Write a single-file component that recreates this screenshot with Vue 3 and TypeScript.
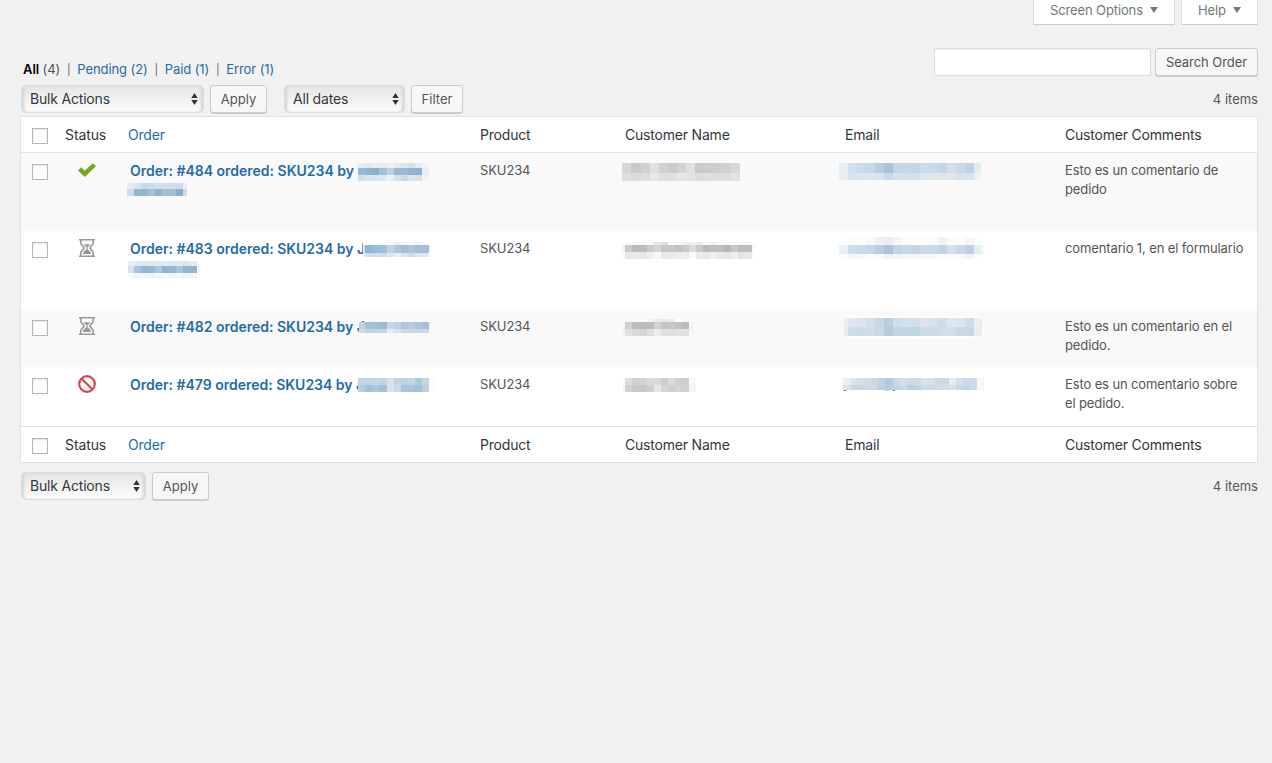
<script setup lang="ts">
type Band = [y: number, height: number, colors: string]

interface Mosaic {
  left: number
  top: number
  widths: number[]
  bands: Band[]
}

interface OrderRow {
  id: number
  status: 'paid' | 'pending' | 'error'
  title: string
  sku: string
  comment: string
  tall: boolean
  orderMasks: Mosaic[]
  nameMask: Mosaic
  emailMask: Mosaic
}

const filters = [
  { label: 'Pending (2)', cls: 'pending' },
  { label: 'Paid (1)', cls: 'paid' },
  { label: 'Error (1)', cls: 'error' },
]

const columns = ['Product', 'Customer Name', 'Email', 'Customer Comments']

const rows: OrderRow[] = [
  {
    id: 484,
    status: 'paid',
    title: 'Order: #484 ordered: SKU234 by J',
    sku: 'SKU234',
    comment: 'Esto es un comentario de pedido',
    tall: true,
    orderMasks: [
      {
        left: 230,
        top: 10,
        widths: [7, 7, 7, 8, 7, 7, 7, 7, 7, 7],
        bands: [
          [0, 5, 'e6ebef e1e8ed e9edf0 e6ebef eff2f4 e4eaee dfe7ed d5e1ea e3eaf0 f2f4f6'],
          [5, 7, '98b9d3 8fb3d0 8bb0ce a4c1d7 c1d0df 98b9d3 9bbbd5 91b5d1 8db2cf e6edf3'],
          [12, 6, 'd0dfe9 d8e3ec dae5ed e0e8ed ebf0f3 d7e2eb cadae7 dbe5ed d7e2ed f1f5f8'],
        ],
      },
      {
        left: -1,
        top: 30,
        widths: [7, 7, 7, 7, 7, 7, 7, 7, 4],
        bands: [
          [0, 6, 'e7ecf1 d9e4ec c9d9e6 cddbe6 d4e0e9 d3e0e9 cfdde7 cfdde8 e8edf1'],
          [6, 7, 'cddce8 92b5d0 94b6d0 a5c1d7 91b3cf a3bfd6 a4bbd4 8baecd ccdce8'],
        ],
      },
    ],
    nameMask: {
      left: -3,
      top: 8,
      widths: [9, 10, 9, 9, 9, 9, 9, 9, 9, 9, 9, 9, 9],
      bands: [
        [0, 2, 'fbfbfb fafafa fafafa fafafa fafafa fdfdfd fcfcfc fbfbfb fdfdfd fefefe fcfcfc fcfcfc fafafa'],
        [2, 10, 'd8d7d8 c9c9c9 cfd1d1 e0e0e1 d0d2d1 cacbc8 d1d2d2 dfdfe0 c7c8c8 cccdcc cdcecd cfd0cf d7d9dc'],
        [12, 8, 'dfdfe0 dadbda dddddd e8e8e8 dedfdf e0e0df e6e8e7 e3e3e3 dcdddb dfe1e1 dddddb dddddb e2e3e6'],
      ],
    },
    emailMask: {
      left: -6,
      top: 8,
      widths: [9, 9, 9, 9, 9, 9, 9, 9, 9, 9, 9, 9, 9, 9, 9, 7],
      bands: [
        [0, 2, 'f8f8f8 fdfcfb fcfbfa fbfafa fafafa fafafa fdfcfb fdfcfb fdfcfb fdfcfb fdfcfb fdfcfb fafafa fdfcfb fafafa f9f9f9'],
        [2, 10, 'e8edf2 d1e0ea c9dbe7 c6d8e5 bacde0 aac3da c3d6e4 c6d7e4 c2d5e3 cddde8 c8dae6 c2d5e3 d5e0eb c8dae6 bfd2e3 e3ebf2'],
        [12, 7, 'e8edf2 dae5ed dae5ed dee6ed dae3ec cad8e5 d4e1e9 d4e0e8 d4e1ea dce6ec dee6eb dfe6eb dfe6ec dae3eb d9e3ec eef1f4'],
      ],
    },
  },
  {
    id: 483,
    status: 'pending',
    title: 'Order: #483 ordered: SKU234 by J',
    sku: 'SKU234',
    comment: 'comentario 1, en el formulario',
    tall: true,
    orderMasks: [
      {
        left: 235,
        top: 11,
        widths: [2, 7, 8, 7, 7, 7, 7, 7, 7, 7, 2],
        bands: [
          [0, 3, 'ffffff fafbfc fbfcfd f8fafc f9fbfc eaf0f4 f3f7f9 fbfcfd f1f5f9 f8fafc ffffff'],
          [3, 8, 'd5e3ed 90b5d2 9abcd6 9fc0d8 bfd3e1 adc8dc 9fbfd6 a8c5da a0bfd6 a2bed9 f4f7fa'],
          [11, 4, 'f6f9fb d0dfea d0dfeb cedee9 d9e5ed e9eff4 d8e4ed cedee8 dae5ee dce7f1 f7f9fb'],
        ],
      },
      {
        left: 0,
        top: 30,
        widths: [6, 7, 7, 7, 7, 7, 7, 7, 7, 7, 3],
        bands: [
          [0, 5, 'e8f0f5 e0eaf1 dce8f0 e1ebf2 ddeaf1 e5edf3 dbe8f0 dfeaf1 dae7f0 e4edf3 fafcfd'],
          [5, 7, 'd5e2ec a9c5da 92b5d1 9abad4 b0c9de 8fb3d0 98b9d3 abc5db 92b5d1 91b5d0 f3f7fa'],
          [12, 5, 'fafcfd eef4f8 f2f6f9 edf3f7 f4f7fa f5f8fb edf3f7 f4f7fa edf3f7 f2f6f9 ffffff'],
        ],
      },
    ],
    nameMask: {
      left: -3,
      top: 11,
      widths: [3, 7, 8, 7, 7, 7, 7, 7, 7, 7, 7, 7, 7, 7, 7, 7, 7, 7, 7, 3],
      bands: [
        [0, 3, 'ffffff f9f9f9 f7f7f7 fafafa fbfbfb e8e8e8 dfe0e0 ffffff f7f7f7 f0f0f0 f1f1f1 ececec f9f9f9 f1f1f1 fafafa fbfbfb f9f9f9 fbfbfb f8f8f8 ffffff'],
        [3, 7, 'f4f4f4 c9caca bababa bdbdbb c9cbcc d8d5d7 c6c8c7 c8caca c2c3c0 c8cacc dddbdf caccca b9bab9 bfc0c0 bdbfbd b5b7b5 c5c7c7 bbbcbc bebfc0 f9f9fa'],
        [10, 7, 'fafafa e9e9e9 eaeaea e7e8e6 efefef f7f7f7 e9e9e9 eaeaea eeeeed ededed fafafa ebebeb e5e6e8 efefef e8e8e9 e4e5e4 efefef e3e4e6 e6e8ea fafbfb'],
      ],
    },
    emailMask: {
      left: -6,
      top: 6,
      widths: [9, 9, 9, 9, 9, 9, 9, 9, 9, 9, 9, 9, 9, 9, 9, 7, 3],
      bands: [
        [0, 8, 'fcfdfe f8fcfd fafdfe f5f9fc ebf1f7 e7eef4 f3f7fa fcfdfd fcfcfc fbfcfc fbfdfd edf3f7 fafdfe fafdfe f4f8fb fcfefe ffffff'],
        [8, 9, 'eaf1f5 cfdfea c9dce8 c6d8e5 b8cde1 abc1dc c2d5e5 c8d8e5 c3d5e4 cbdce8 c8dae7 c1d4e3 d7e1ec c8d9e8 c0d1e5 e5edf4 f3f8fb'],
        [17, 5, 'fafcfe f1f6fa f4f8fb fbfdfe f9fafc edf3f8 f0f5f9 f2f7fa f2f6f9 f4f8fb f3f7fa fafcfe f7fafc fafafb f1f6fa fafcfe ffffff'],
      ],
    },
  },
  {
    id: 482,
    status: 'pending',
    title: 'Order: #482 ordered: SKU234 by J',
    sku: 'SKU234',
    comment: 'Esto es un comentario en el pedido.',
    tall: false,
    orderMasks: [
      {
        left: 231,
        top: 13,
        widths: [6, 7, 7, 8, 7, 7, 7, 7, 7, 7, 2],
        bands: [
          [0, 7, 'bfd1e0 a4c1d7 a3c0d6 9abbd3 c4d7e3 bdd1df aac6d9 b7cddd aac6d9 a5c0d9 f3f6f9'],
          [7, 4, 'cbdce7 c1d4e2 c2d5e3 c4d7e5 e4edf2 d8e4eb c8dae6 c8dae6 c7d8e4 c9d9e7 f5f7f9'],
        ],
      },
    ],
    nameMask: {
      left: -2,
      top: 10,
      widths: [2, 7, 8, 7, 7, 7, 7, 7, 7, 7, 5],
      bands: [
        [0, 3, 'f9f9f9 f5f5f5 f8f8f8 fefefe f5f5f5 e9e9e9 e8e8e8 ededed ffffff f6f6f6 f9f9f9'],
        [3, 7, 'f5f5f5 cecdd1 bdbebe bdbebb bcbdbf d3d2d4 c5c6c3 c5c9c6 c2c4c2 bcbdc0 f3f5f6'],
        [10, 7, 'f2f2f2 e0dfe2 d9dad9 d5d6d3 dedfe0 ececed e0e0df dddfdc e1e1e1 e2e2e3 f6f8f8'],
      ],
    },
    emailMask: {
      left: -1,
      top: 6,
      widths: [4, 9, 9, 9, 9, 9, 9, 9, 9, 9, 9, 9, 9, 9, 9, 8],
      bands: [
        [0, 3, 'fcfbf9 fefdfb fefdfb fefdfb fefdfb fefdfb fefdfb fefdfb fefdfb fefdfb fefdfb fefdfb fefdfb fefdfb fefdfb fcfbf9'],
        [3, 9, 'e9eef1 dee7ed d9e4eb d4e0e9 c8d7e4 bbcfdf cfdde8 d2e0e9 cfdfe8 dae4ec d6e1ea cedde8 dfe7ed dce5ec ceddea eaeff2'],
        [12, 9, 'e4ebf0 d0dee8 cbdce7 cfdde8 c9d8e4 b6cadd c3d5e3 c2d5e3 c0d5e2 cbdce7 cddde7 d2dfe8 d1dee8 cad7e4 c9d8e6 e8edf1'],
        [21, 2, 'fafafa fefefe fefefe fefefe fefefe fefefe fefefe fefefe fefefe fefefe fefefe fefefe fefefe fefefe fefefe fafafa'],
      ],
    },
  },
  {
    id: 479,
    status: 'error',
    title: 'Order: #479 ordered: SKU234 by J',
    sku: 'SKU234',
    comment: 'Esto es un comentario sobre el pedido.',
    tall: false,
    orderMasks: [
      {
        left: 230,
        top: 11,
        widths: [7, 7, 7, 8, 7, 7, 7, 7, 7, 7, 6],
        bands: [
          [0, 7, 'c5d7e4 c3d5e3 c4d6e4 bfd2e1 d7e3ec c3d5e2 bfd3e2 c4d6e4 afc9db c1d5e3 fbfcfd'],
          [7, 7, 'b7cee0 a5c1da adc8dd a3bfda d8e3ec ced9e5 a8c4dc a8c5da a5c1da b9d0e3 fdfdfe'],
        ],
      },
    ],
    nameMask: {
      left: -2,
      top: 10,
      widths: [2, 7, 8, 7, 7, 7, 7, 7, 7, 7, 7],
      bands: [
        [1, 7, 'fbfbfb dddddd d0d0d0 d3d3d2 d9dbd9 dcd9d8 cdcece d9dad9 cfd0cf cdcfd1 f8f8fa'],
        [8, 7, 'f5f5f5 d1d1d2 c8c8c8 c6c7c2 cecfcd e6e5e4 d5d5d5 cecfcf d3d3d2 d1d1d2 f3f4f8'],
      ],
    },
    emailMask: {
      left: -5,
      top: 11,
      widths: [3, 1, 2, 4, 7, 7, 7, 7, 7, 4, 4, 2, 5, 7, 7, 7, 7, 7, 7, 7, 7, 7, 7, 7, 7],
      bands: [
        [0, 7, 'fafcfd eaf0f4 eaf0f4 eaf0f4 dae6ed d2e0ea cfdee9 c7d8e6 bed0e2 afc9df afc9df c8dae9 c8dae9 d4e0e9 c9dce7 ccdde7 d8e4ec d1e0e9 c8dae5 c7d9e6 e4ebf2 d4e1ea c9dae9 cbdcea f5f9fd'],
        [7, 5, 'fafcfd dae5ee dae5ee dae5ee c9dae7 c4d7e4 cadae7 ccdaea bdcee1 b4cade b4cade c0d3e4 c0d3e4 c8dae6 b9d0de bfd4e0 c9dce9 c4d8e6 cfdeea d0deea d6e1ed c6d9e6 c1d5e4 cbdcea f5f9fd'],
        [12, 1, 'ffffff d6e1e8 3f83b4 ffffff ffffff ffffff ffffff ffffff ffffff bfd1e1 ffffff 3f83b4 ffffff ffffff ffffff ffffff ffffff ffffff ffffff ffffff ffffff ffffff ffffff ffffff ffffff'],
      ],
    },
  },
]

function cells(mosaic: Mosaic) {
  return mosaic.bands.flatMap(([y, height, colors]) => {
    const fills = colors.split(' ')
    let x = 0
    return mosaic.widths.map((width, i) => {
      const cell = { x, y, width, height, fill: '#' + fills[i] }
      x += width
      return cell
    })
  })
}

const maskWidth = (m: Mosaic) => m.widths.reduce((sum, w) => sum + w, 0)
const maskHeight = (m: Mosaic) => Math.max(...m.bands.map(([y, h]) => y + h))
const maskPlace = (m: Mosaic) => ({ left: m.left + 'px', top: m.top + 'px' })
</script>

<template>
  <div class="page">
    <div class="screen-meta">
      <button class="meta-tab options"><span>Screen Options</span><i class="caret"></i></button>
      <button class="meta-tab help"><span>Help</span><i class="caret"></i></button>
    </div>

    <div class="top-line">
      <ul class="filters">
        <li><b>All</b> <span class="count">(4)</span></li>
        <li v-for="f in filters" :key="f.label" :class="f.cls"><span class="bar">|</span><a>{{ f.label }}</a></li>
      </ul>
      <div class="search">
        <input type="text" aria-label="Search Order" />
        <button class="button search-button">Search Order</button>
      </div>
    </div>

    <div class="tablenav top">
      <div class="select wide">
        <span>Bulk Actions</span>
        <svg width="7" height="12" viewBox="0 0 7 12"><path d="M3.5 0 6.7 5H.3zM3.5 12 .3 7h6.4z" /></svg>
      </div>
      <button class="button apply">Apply</button>
      <div class="select dates">
        <span>All dates</span>
        <svg width="7" height="12" viewBox="0 0 7 12"><path d="M3.5 0 6.7 5H.3zM3.5 12 .3 7h6.4z" /></svg>
      </div>
      <button class="button filter">Filter</button>
      <span class="items">4 items</span>
    </div>

    <div class="table">
      <div class="row head">
        <div><i class="checkbox"></i></div>
        <div><span class="status-label">Status</span></div>
        <div><a>Order</a></div>
        <div v-for="c in columns" :key="c">{{ c }}</div>
      </div>
      <div v-for="row in rows" :key="row.id" class="row body" :class="{ tall: row.tall }">
        <div><i class="checkbox"></i></div>
        <div class="status">
          <svg v-if="row.status === 'paid'" width="18" height="18" viewBox="0 0 18 18">
            <path d="M0 9.4 3.1 6.2 6.7 9.7 14.9 2.2 18 5.3 6.7 16z" fill="#74a824" />
          </svg>
          <svg v-else-if="row.status === 'pending'" width="18" height="18" viewBox="0 0 18 18">
            <path
              d="M1 .8h16M1 17.2h16M2.8 1.5v2.7C2.8 6 6.1 7.6 6.1 9s-3.3 3-3.3 4.8v2.7M15.2 1.5v2.7c0 1.8-3.3 3.4-3.3 4.8s3.3 3 3.3 4.8v2.7"
              fill="none"
              stroke="#999"
              stroke-width="1.6"
            />
            <path d="M5.8 5.2h6.4Q11.5 6.8 9.6 8v2.2q2.8 1.5 3.8 4.9H4.6q1-3.4 3.8-4.9V8Q6.5 6.8 5.8 5.2z" fill="#999" />
          </svg>
          <svg v-else width="18" height="18" viewBox="0 0 18 18">
            <circle cx="9" cy="9" r="7.8" fill="none" stroke="#d94848" stroke-width="2.2" />
            <path d="m3.7 3.7 10.6 10.6" stroke="#d94848" stroke-width="2.2" />
          </svg>
        </div>
        <div class="order">
          <a>{{ row.title }}</a>
          <svg
            v-for="(m, i) in row.orderMasks"
            :key="i"
            class="mask"
            :style="maskPlace(m)"
            :width="maskWidth(m)"
            :height="maskHeight(m)"
            shape-rendering="crispEdges"
          >
            <rect v-for="(c, k) in cells(m)" :key="k" v-bind="c" />
          </svg>
        </div>
        <div class="sku">{{ row.sku }}</div>
        <div v-for="(m, i) in [row.nameMask, row.emailMask]" :key="i">
          <svg
            class="mask"
            :style="maskPlace(m)"
            :width="maskWidth(m)"
            :height="maskHeight(m)"
            shape-rendering="crispEdges"
          >
            <rect v-for="(c, k) in cells(m)" :key="k" v-bind="c" />
          </svg>
        </div>
        <div class="comment">{{ row.comment }}</div>
      </div>
      <div class="row foot">
        <div><i class="checkbox"></i></div>
        <div><span class="status-label">Status</span></div>
        <div><a>Order</a></div>
        <div v-for="c in columns" :key="c">{{ c }}</div>
      </div>
    </div>

    <div class="tablenav bottom">
      <div class="select narrow">
        <span>Bulk Actions</span>
        <svg width="7" height="12" viewBox="0 0 7 12"><path d="M3.5 0 6.7 5H.3zM3.5 12 .3 7h6.4z" /></svg>
      </div>
      <button class="button apply">Apply</button>
      <span class="items">4 items</span>
    </div>
  </div>
</template>

<style>
html,
body {
  margin: 0;
  background: #f1f1f1;
}
</style>

<style scoped>
.page {
  box-sizing: border-box;
  width: 1272px;
  height: 763px;
  padding: 0 14px 0 20px;
  overflow: hidden;
  background: #f1f1f1;
  color: #555;
  font-family: Inter, "Liberation Sans", sans-serif;
  font-size: 13px;
  line-height: 19px;
}

a {
  color: #1f6ca8;
}

button {
  font: inherit;
}

.screen-meta {
  display: flex;
  justify-content: flex-end;
  gap: 6px;
  height: 25px;
}

.meta-tab {
  box-sizing: border-box;
  display: flex;
  align-items: center;
  gap: 7px;
  height: 25px;
  padding: 0 0 3px 16px;
  border: 1px solid #ddd;
  border-top: 0;
  border-bottom-color: #ccc;
  background: #fff;
  color: #72777c;
  letter-spacing: -0.12px;
  white-space: nowrap;
}

.options {
  width: 142px;
}

.help {
  width: 77px;
}

.caret {
  margin-bottom: 2px;
  border: 4px solid transparent;
  border-top: 6px solid #72777c;
  border-bottom: 0;
}

.top-line {
  display: flex;
  justify-content: space-between;
  height: 60px;
}

.filters {
  display: flex;
  margin: 35px 0 0 3px;
  padding: 0;
  list-style: none;
  letter-spacing: -0.08px;
  white-space: nowrap;
}

.filters b {
  color: #000;
  font-weight: 600;
}

.bar {
  display: inline-block;
  width: 17px;
  color: #666;
  font-size: 11px;
  text-align: center;
}

.search {
  display: flex;
  gap: 4px;
  margin-top: 23px;
}

.search input {
  box-sizing: border-box;
  width: 217px;
  height: 28px;
  border: 1px solid #ddd;
  background: #fff;
  box-shadow: inset 0 1px 2px rgba(0, 0, 0, 0.07);
}

.button {
  box-sizing: border-box;
  height: 28px;
  padding: 0;
  border: 1px solid #ccc;
  border-radius: 3px;
  background: #f7f7f7;
  box-shadow: 0 1px 0 #ccc;
  color: #555;
  text-align: center;
  white-space: nowrap;
}

.search-button {
  width: 103px;
  letter-spacing: -0.05px;
}

.apply {
  width: 57px;
}

.filter {
  width: 52px;
}

.tablenav {
  display: flex;
  align-items: flex-start;
  padding-left: 1px;
}

.top {
  height: 31px;
}

.bottom {
  margin-top: 9px;
}

.select {
  box-sizing: border-box;
  display: flex;
  align-items: center;
  justify-content: space-between;
  height: 28px;
  padding: 0 5px 0 8px;
  border: 1px solid #ddd;
  border-radius: 5px;
  background: linear-gradient(#e5e5e5, #fdfdfd);
  box-shadow: inset 3px 0 3px -1px #d4d4d4, inset -3px 0 3px -1px #d4d4d4;
  color: #32373c;
  font-size: 14px;
  letter-spacing: -0.19px;
  white-space: nowrap;
}

.select span {
  padding-bottom: 1px;
}

.select svg {
  fill: #333;
}

.wide {
  width: 183px;
  margin-right: 6px;
}

.dates {
  width: 121px;
  margin: 0 6px 0 17px;
}

.narrow {
  width: 125px;
  margin-right: 6px;
}

.items {
  margin: 5px 0 0 auto;
}

.table {
  border: 1px solid #e1e1e1;
  background: #fff;
}

.row {
  display: grid;
  grid-template-columns: 44px 63px 352px 145px 220px 220px 1fr;
}

.row > div {
  position: relative;
}

.head,
.foot {
  height: 35px;
  color: #32373c;
  font-size: 14px;
  letter-spacing: -0.2px;
  line-height: 36px;
}

.status-label {
  letter-spacing: -0.1px;
}

.head {
  border-bottom: 1px solid #e1e1e1;
}

.foot {
  border-top: 1px solid #e1e1e1;
}

.checkbox {
  box-sizing: border-box;
  display: block;
  width: 16px;
  height: 16px;
  margin: 11px 0 0 11px;
  border: 1px solid #b4b9be;
  background: #fff;
  box-shadow: inset 0 1px 2px rgba(0, 0, 0, 0.1);
}

.body {
  height: 58px;
}

.body.tall {
  height: 78px;
}

.body:nth-child(even) {
  background: #f9f9f9;
}

.body:nth-child(5) {
  height: 59px;
}

.status svg {
  display: block;
  margin: 8px 0 0 13px;
}

.order {
  padding: 8px 0 0 2px;
  font-size: 14px;
  font-weight: 600;
  letter-spacing: -0.01px;
  line-height: 20px;
  white-space: nowrap;
}

.sku {
  padding-top: 8px;
  letter-spacing: -0.12px;
}

.comment {
  width: 183px;
  padding-top: 8px;
  letter-spacing: -0.12px;
}

.mask {
  position: absolute;
}
</style>
